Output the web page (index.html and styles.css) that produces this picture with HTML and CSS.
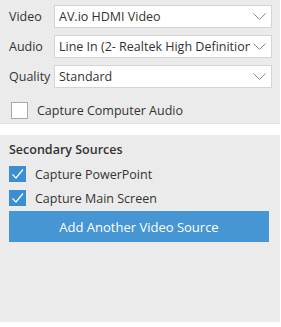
FILE: index.html
```html
<!DOCTYPE html>
<html lang="en">
<head>
  <meta charset="UTF-8">
  <title>Sources</title>
  <link rel="stylesheet" href="styles.css">
</head>
<body>

  <div class="panel sources">
    <div class="field">
      <span class="field-label">Video</span>
      <div class="select">
        <span class="select-value">AV.io HDMI Video</span>
        <svg class="chevron" width="13" height="7" viewBox="0 0 13 7"><polyline points="0.5,0.5 6.5,6.5 12.5,0.5" /></svg>
      </div>
    </div>
    <div class="field">
      <span class="field-label">Audio</span>
      <div class="select">
        <span class="select-value">Line In (2- Realtek High Definition Audio)</span>
        <svg class="chevron" width="13" height="7" viewBox="0 0 13 7"><polyline points="0.5,0.5 6.5,6.5 12.5,0.5" /></svg>
      </div>
    </div>
    <div class="field">
      <span class="field-label">Quality</span>
      <div class="select">
        <span class="select-value">Standard</span>
        <svg class="chevron" width="13" height="7" viewBox="0 0 13 7"><polyline points="0.5,0.5 6.5,6.5 12.5,0.5" /></svg>
      </div>
    </div>
    <label class="check check-audio">
      <span class="box"></span>
      <span>Capture Computer Audio</span>
    </label>
  </div>

  <div class="panel secondary">
    <div class="section-title">Secondary Sources</div>
    <label class="check check-on">
      <span class="box"><svg width="17" height="16" viewBox="0 0 17 16"><polyline points="3.5,8.5 7,12 14,3.5" /></svg></span>
      <span>Capture PowerPoint</span>
    </label>
    <label class="check check-on">
      <span class="box"><svg width="17" height="16" viewBox="0 0 17 16"><polyline points="3.5,8.5 7,12 14,3.5" /></svg></span>
      <span>Capture Main Screen</span>
    </label>
    <button class="add-btn">Add Another Video Source</button>
  </div>

</body>
</html>
```

FILE: styles.css
```css
body {
  margin: 0;
  width: 281px;
  background: #fff;
  font-family: "Open Sans", "Noto Sans", sans-serif;
  font-size: 12.5px;
  color: #333;
}
.panel {
  width: 280px;
  box-sizing: border-box;
  background: #ebebeb;
}
.sources {
  padding: 5px 8px 5px 9px;
  border-bottom: 1px solid #e2e2e2;
  height: 124px;
}
.field {
  display: flex;
  align-items: center;
  height: 23px;
  margin-bottom: 7px;
}
.field-label {
  flex: none;
  width: 45px;
}
.select {
  flex: 1;
  min-width: 0;
  display: flex;
  align-items: center;
  height: 23px;
  box-sizing: border-box;
  background: #fff;
  border: 1px solid #d4d4d4;
  padding: 0 5px 0 4px;
}
.select-value {
  flex: 1;
  min-width: 0;
  white-space: nowrap;
  overflow: hidden;
}
.chevron {
  flex: none;
  margin-left: 3px;
}
.chevron polyline {
  fill: none;
  stroke: #8a8a8a;
  stroke-width: 1;
}
.check {
  display: flex;
  align-items: center;
  gap: 9px;
  height: 16px;
}
.check-audio {
  margin-top: 14px;
  margin-left: 2px;
  height: 17px;
}
.box {
  flex: none;
  width: 17px;
  height: 17px;
  box-sizing: border-box;
  border: 1px solid #a8a8a8;
  background: #fff;
}
.secondary {
  margin-top: 11px;
  height: 187px;
  padding: 6px 11px 0 9px;
}
.section-title {
  font-weight: 600;
  line-height: 18px;
  margin-bottom: 7px;
}
.check-on {
  margin-bottom: 8px;
}
.check-on .box {
  width: 17px;
  height: 16px;
  border: none;
  background: #3a8ed3;
}
.check-on .box svg {
  display: block;
}
.check-on polyline {
  fill: none;
  stroke: #fff;
  stroke-width: 1.2;
}
.add-btn {
  display: block;
  width: 100%;
  height: 31px;
  margin-top: -3px;
  border: none;
  background: #4696d3;
  color: #fff;
  font-family: inherit;
  font-size: 13px;
}
```
